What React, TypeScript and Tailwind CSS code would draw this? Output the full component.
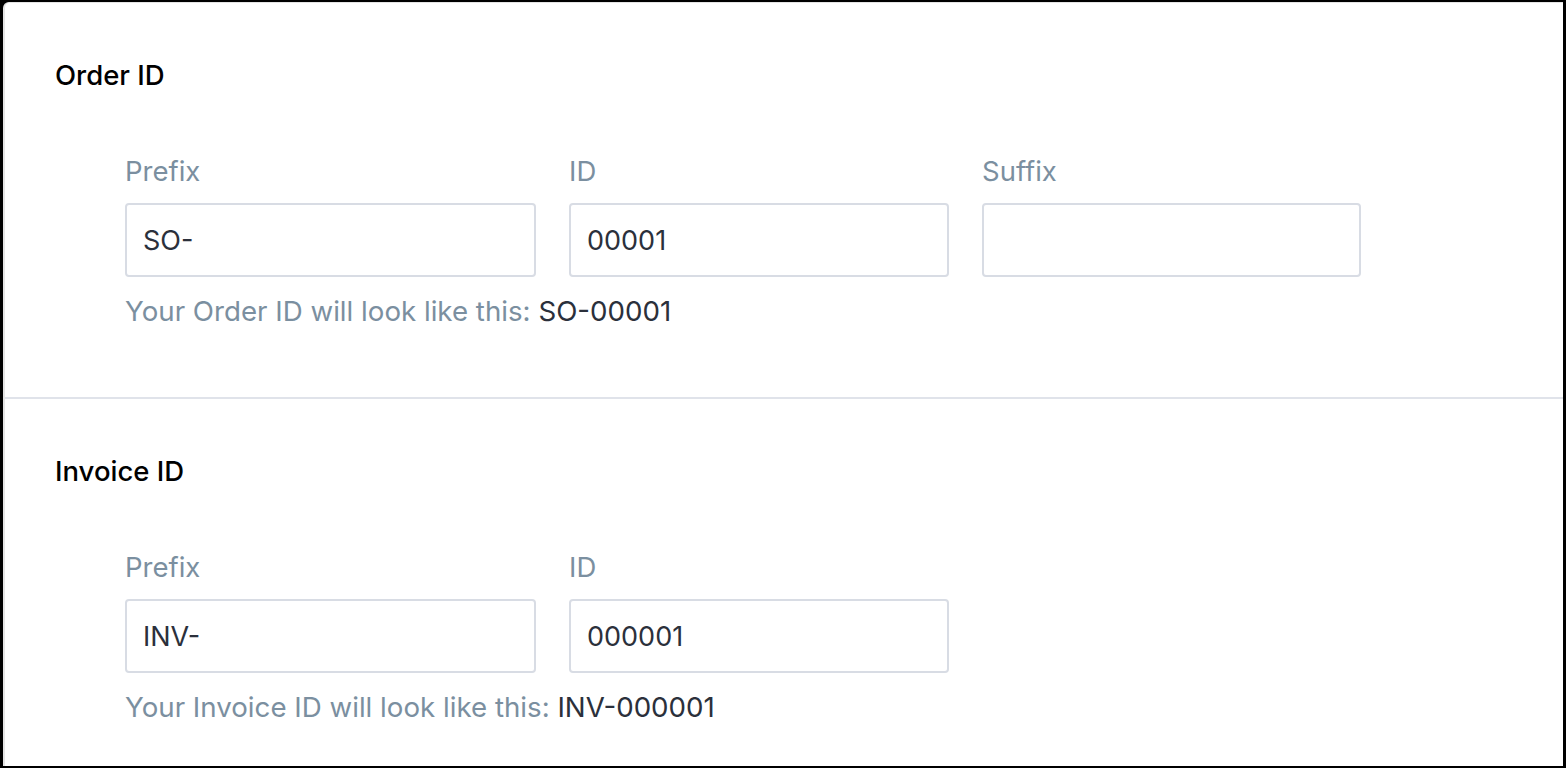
type Field = {
  label: string;
  value: string;
  width: string;
};

type Section = {
  title: string;
  fields: Field[];
  preview: string;
};

const sections: Section[] = [
  {
    title: "Order ID",
    fields: [
      { label: "Prefix", value: "SO-", width: "w-[411px]" },
      { label: "ID", value: "00001", width: "w-[380px]" },
      { label: "Suffix", value: "", width: "w-[379px]" },
    ],
    preview: "SO-00001",
  },
  {
    title: "Invoice ID",
    fields: [
      { label: "Prefix", value: "INV-", width: "w-[411px]" },
      { label: "ID", value: "000001", width: "w-[380px]" },
    ],
    preview: "INV-000001",
  },
];

function IdField({ field }: { field: Field }) {
  return (
    <label className={`flex flex-col ${field.width}`}>
      <span className="text-[27.5px] leading-[40px] text-[#7b8fa0]">{field.label}</span>
      <input
        defaultValue={field.value}
        className="mt-[12px] h-[74px] rounded-[4px] border-2 border-[#d8dce4] bg-white px-[16px] text-[27px] text-[#2b303b] outline-none"
      />
    </label>
  );
}

export default function App() {
  return (
    <div className="h-screen w-full border-t-2 border-b-2 border-l-[3px] border-r-[3px] border-black bg-black font-['Inter',sans-serif]">
      <div className="h-full overflow-hidden rounded-tl-[6px] border-l-2 border-t border-[#e4e4e4] bg-white">
        {sections.map((section, i) => (
          <section
            key={section.title}
            className={`pl-[50px] pt-[52px] ${i === 0 ? "h-[396px] border-b-2 border-[#e0e3ea]" : ""}`}
          >
            <h2 className="text-[27.5px] font-medium leading-[40px] text-black">
              {section.title}
            </h2>
            <div className="ml-[70px] mt-[56px]">
              <div className="flex gap-[33px]">
                {section.fields.map((field) => (
                  <IdField key={field.label} field={field} />
                ))}
              </div>
              <p className="mt-[14px] text-[27.7px] leading-[40px] text-[#7b8fa0]">
                Your {section.title} will look like this:{" "}
                <span className="text-[#2b303b]">{section.preview}</span>
              </p>
            </div>
          </section>
        ))}
      </div>
    </div>
  );
}
